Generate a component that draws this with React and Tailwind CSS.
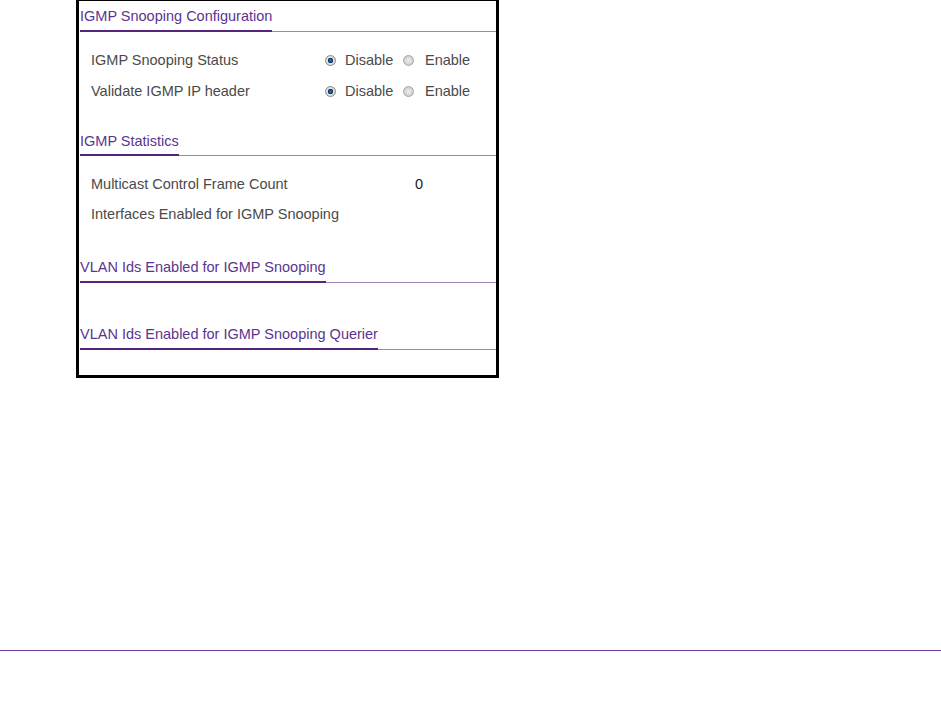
import React from "react";

const Heading = ({ children, className = "", top = "pt-[7px] pb-[5px]" }) => (
  <div className={`flex border-b border-[#9c84b8] ${className}`}>
    <span
      className={`-mb-px inline-block border-b-2 border-[#56267f] leading-[17px] text-[#5a3590] ${top}`}
    >
      {children}
    </span>
  </div>
);

const Radio = ({ checked }) => (
  <span
    className={
      checked
        ? "inline-block h-[11px] w-[11px] rounded-full border border-[#8a8a8a] bg-[radial-gradient(circle,#3c7cc0_0,#163f72_30%,#1b3a60_38%,#e6e6e6_48%,#c4c4c4_100%)]"
        : "inline-block h-[11px] w-[11px] rounded-full border border-[#a8a8a8] bg-[radial-gradient(circle,#eeeeee_0,#d6d6d6_55%,#bcbcbc_100%)]"
    }
  />
);

const RadioRow = ({ label }) => (
  <div className="flex h-[31px] items-center pl-[11px]">
    <span className="w-[234px]">{label}</span>
    <Radio checked />
    <span className="ml-[9px] w-[58px]">Disable</span>
    <Radio />
    <span className="ml-[11px]">Enable</span>
  </div>
);

const StatRow = ({ label, value }) => (
  <div className="flex h-[30px] items-center pl-[11px]">
    <span className="w-[324px]">{label}</span>
    {value !== undefined && <span className="text-[#1a1a1a]">{value}</span>}
  </div>
);

export default function App() {
  return (
    <div className="min-h-[718px] bg-white font-['Liberation_Sans',Arial,sans-serif] text-[14.5px] text-[#4a4a4a]">
      <div className="ml-[76px] w-[423px] border-x-[3px] border-t border-b-[3px] border-black pl-px pb-[25px]">
        <Heading>IGMP Snooping Configuration</Heading>
        <div className="mt-[13px]">
          <RadioRow label="IGMP Snooping Status" />
          <RadioRow label="Validate IGMP IP header" />
        </div>

        <Heading className="mt-[18px]" top="pt-[8px] pb-[4px]">
          IGMP Statistics
        </Heading>
        <div className="mt-[14px]">
          <StatRow label="Multicast Control Frame Count" value="0" />
          <StatRow label="Interfaces Enabled for IGMP Snooping" />
        </div>

        <Heading className="mt-[22px]">VLAN Ids Enabled for IGMP Snooping</Heading>
        <Heading className="mt-[36px]">VLAN Ids Enabled for IGMP Snooping Querier</Heading>
      </div>

      <div className="mt-[272px] h-px bg-[#6b3a9e]" />
    </div>
  );
}
